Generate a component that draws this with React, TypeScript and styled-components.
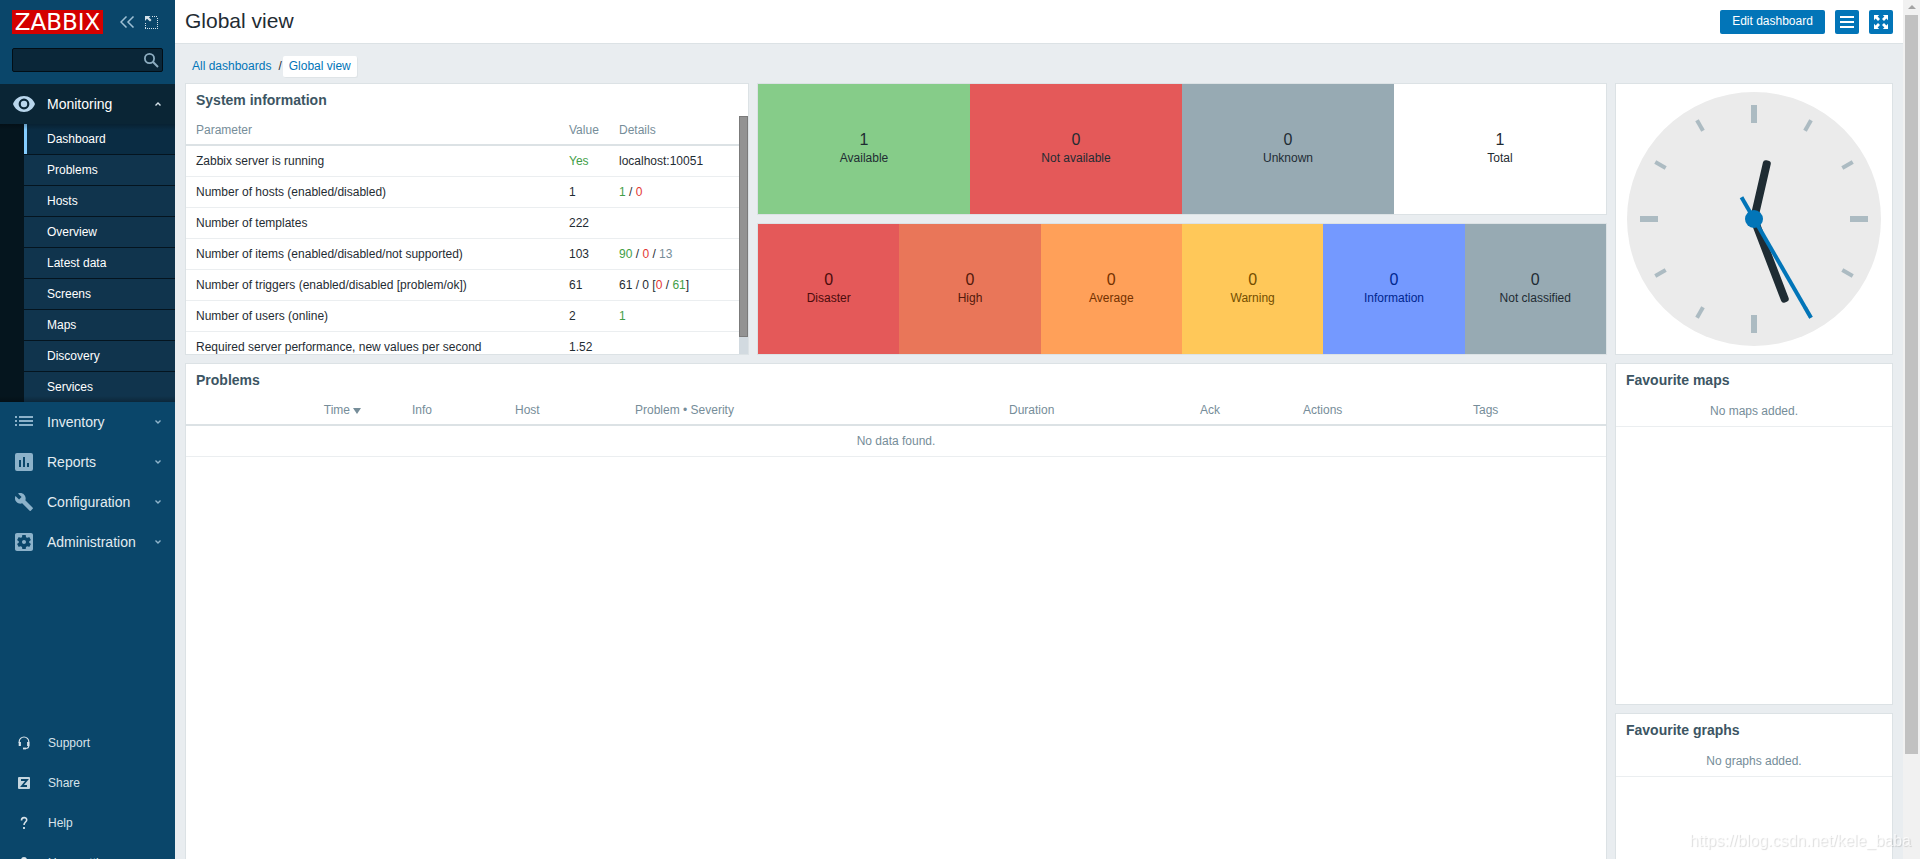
import React from 'react';
import styled, { createGlobalStyle } from 'styled-components';

const c = {
  side: '#0a466a',
  page: '#e9edf0',
  line: '#dce2e5',
  row: '#ebeef0',
  text: '#1f2c33',
  muted: '#768d99',
  title: '#3c5563',
  link: '#0275b8',
  green: '#429e47',
  red: '#e33734',
};

const GlobalStyle = createGlobalStyle`
  *, *::before, *::after { box-sizing: border-box; }
  body {
    margin: 0;
    background: ${c.page};
    color: ${c.text};
    font: 12px/18px "Liberation Sans", Arial, sans-serif;
  }
  ul { margin: 0; padding: 0; list-style: none; }
  a { color: inherit; text-decoration: none; }
`;

const Layout = styled.div`
  display: flex;
  height: 100vh;
  overflow: hidden;
`;

/* ---------- sidebar ---------- */

const Sidebar = styled.aside`
  flex: 0 0 175px;
  display: flex;
  flex-direction: column;
  overflow: hidden;
  background: ${c.side};
  color: #fff;
`;

const Brand = styled.div`
  display: flex;
  align-items: center;
  padding: 10px 12px 14px;
`;

const Logo = styled.a`
  width: 91px;
  height: 24px;
  margin-right: 17px;
  background: #d40000;
  color: #fff;
  font: 23px/24px "DejaVu Sans", sans-serif;
  text-align: center;
`;

const PlainButton = styled.button`
  display: flex;
  padding: 0;
  border: 0;
  background: none;
  color: #9fc0d5;
  & + & { margin-left: 10px; }
`;

const SearchBox = styled.form`
  display: flex;
  align-items: center;
  height: 24px;
  margin: 0 12px 12px;
  padding-right: 3px;
  border: 1px solid #020e16;
  border-radius: 2px;
  background: #0a2638;
`;

const SearchInput = styled.input`
  flex: 1;
  min-width: 0;
  height: 22px;
  padding: 0 5px;
  border: 0;
  outline: 0;
  background: none;
  color: #fff;
  font: inherit;
`;

const MenuButton = styled.button<{ $open?: boolean }>`
  display: flex;
  align-items: center;
  width: 100%;
  height: 40px;
  padding: 0 14px 0 12px;
  border: 0;
  background: ${p => (p.$open ? '#0a2535' : 'none')};
  color: ${p => (p.$open ? '#fff' : '#e3ecf1')};
  font: 14px/20px "Liberation Sans", Arial, sans-serif;
  text-align: left;
`;

const MenuIcon = styled.span<{ $open?: boolean }>`
  display: flex;
  justify-content: center;
  width: 24px;
  margin-right: 11px;
  color: ${p => (p.$open ? '#b9d6ec' : '#8cb2ca')};
`;

const MenuLabel = styled.span`
  flex: 1;
`;

const Submenu = styled.ul`
  position: relative;
  padding-left: 24px;
  background: #05151e;
  &::after {
    content: '';
    position: absolute;
    inset: 0;
    pointer-events: none;
    background: linear-gradient(rgba(0, 0, 0, 0.25), transparent 6px, transparent calc(100% - 6px), rgba(0, 0, 0, 0.25));
  }
`;

const SubmenuItem = styled.li`
  & + & { border-top: 1px solid #04141f; }
`;

const SubmenuLink = styled.a<{ $active?: boolean }>`
  display: block;
  height: 30px;
  padding-left: 20px;
  border-left: 3px solid ${p => (p.$active ? '#84cdff' : 'transparent')};
  background: ${p => (p.$active ? '#0a2c43' : '#10344d')};
  background-clip: border-box;
  color: #fff;
  line-height: 30px;
`;

const FooterMenu = styled.ul`
  margin-top: 161px;
`;

const FooterLink = styled.a`
  display: flex;
  align-items: center;
  height: 40px;
  padding-left: 17px;
  gap: 17px;
  color: #d8e3ea;
  svg { width: 14px; flex: none; }
`;

/* ---------- page ---------- */

const Main = styled.main`
  flex: 1;
  min-width: 0;
  overflow: hidden;
`;

const Header = styled.header`
  display: flex;
  align-items: center;
  gap: 10px;
  height: 44px;
  padding: 0 10px;
  border-bottom: 1px solid ${c.line};
  background: #fff;
`;

const PageTitle = styled.h1`
  flex: 1;
  margin: 0;
  padding-bottom: 2px;
  font-size: 21px;
  line-height: 24px;
  font-weight: 400;
`;

const ActionButton = styled.button<{ $icon?: boolean }>`
  display: flex;
  align-items: center;
  justify-content: center;
  height: 24px;
  width: ${p => (p.$icon ? '24px' : '105px')};
  padding: 0 0 2px;
  border: 0;
  border-radius: 2px;
  background: ${c.link};
  color: #fff;
  font: inherit;
  svg { margin-top: 2px; }
`;

const Breadcrumbs = styled.nav`
  display: flex;
  align-items: center;
  padding: 11px 17px 6px;
  line-height: 22px;
`;

const Crumb = styled.a<{ $current?: boolean }>`
  color: ${c.link};
  margin: ${p => (p.$current ? '0 0 0 1px' : '0 7px 0 0')};
  padding: ${p => (p.$current ? '0 6px' : '0')};
  background: ${p => (p.$current ? '#fff' : 'none')};
  border-radius: 2px;
  box-shadow: ${p => (p.$current ? `1px 1px 0 0 #dfe4e7` : 'none')};
  line-height: 21px;
`;

const Grid = styled.div`
  display: grid;
  grid-template-columns: repeat(24, 1fr);
  grid-auto-rows: 62px;
  gap: 8px;
  padding: 0 10px 44px;
`;

const Widget = styled.section<{ $cols: number; $rows: number }>`
  grid-column: span ${p => p.$cols};
  grid-row: span ${p => p.$rows};
  display: flex;
  flex-direction: column;
  min-width: 0;
  overflow: hidden;
  border: 1px solid ${c.line};
  background: #fff;
`;

const WidgetTitle = styled.h4`
  flex: none;
  margin: 0;
  padding: 6px 10px;
  color: ${c.title};
  font-size: 14px;
  line-height: 20px;
`;

const ScrollBody = styled.div`
  flex: 1;
  display: flex;
  min-height: 0;
`;

const ScrollContent = styled.div`
  flex: 1;
  overflow: hidden;
`;

const InnerTrack = styled.div`
  width: 9px;
  background: #d2dae0;
`;

const InnerThumb = styled.div`
  height: 93%;
  border: 1px solid #7b7b7b;
  background: #939393;
`;

const Table = styled.table`
  width: 100%;
  border-collapse: separate;
  border-spacing: 0;
  table-layout: fixed;
`;

const Th = styled.th<{ $right?: boolean }>`
  height: 30px;
  padding: 0 5px;
  border-bottom: 2px solid ${c.line};
  color: ${c.muted};
  font-weight: 400;
  text-align: ${p => (p.$right ? 'right' : 'left')};
  white-space: nowrap;
  &:first-child { padding-left: 10px; }
`;

const Td = styled.td`
  height: 31px;
  padding: 0 5px;
  border-bottom: 1px solid ${c.row};
  white-space: nowrap;
  &:first-child { padding-left: 10px; }
`;

const EmptyTd = styled(Td)`
  color: ${c.muted};
  text-align: center;
  &:first-child { padding: 0 5px; }
`;

const EmptyRow = styled.div`
  height: 31px;
  border-bottom: 1px solid ${c.row};
  color: ${c.muted};
  line-height: 30px;
  text-align: center;
`;

const Tone = styled.span<{ $tone: string }>`
  color: ${p => p.$tone};
`;

const SortArrow = styled.span`
  display: inline-block;
  margin-left: 3px;
  border: 4px solid transparent;
  border-top: 6px solid ${c.muted};
  border-bottom: 0;
`;

const Tiles = styled.div`
  flex: 1;
  display: flex;
`;

const Tile = styled.div<{ $bg: string; $fg: string }>`
  flex: 1 1 0;
  display: flex;
  flex-direction: column;
  align-items: center;
  justify-content: center;
  background: ${p => p.$bg};
  color: ${p => p.$fg};
`;

const TileCount = styled.span`
  font-size: 16px;
`;

const ClockBox = styled.div`
  flex: 1;
  display: flex;
  align-items: center;
  justify-content: center;
  min-height: 0;
  padding: 8px;
  svg { height: 100%; max-width: 100%; }
`;

const PageTrack = styled.div`
  flex: 0 0 17px;
  display: flex;
  flex-direction: column;
  align-items: center;
  background: #f1f1f1;
`;

const TrackArrow = styled.div`
  height: 15px;
  padding-top: 5px;
  &::before {
    content: '';
    display: block;
    border: 4px solid transparent;
    border-top: 0;
    border-bottom-color: #a3a3a3;
  }
`;

const PageThumb = styled.div`
  width: 13px;
  height: 86%;
  background: #c1c1c1;
`;

const Watermark = styled.div`
  position: fixed;
  right: 9px;
  bottom: 9px;
  color: rgba(255, 255, 255, 0.7);
  font-size: 16px;
  text-shadow: 1px 1px 1px rgba(0, 0, 0, 0.14);
`;

/* ---------- icons ---------- */

const EyeIcon = () => (
  <svg width="22" height="16" viewBox="0 0 22 16" fill="currentColor">
    <path fillRule="evenodd" d="M11 0C6 0 1.8 3.200 0 8c1.800 4.800 6 8 11 8s9.200-3.200 11-8C20.200 3.200 16 0 11 0zm0 13.400A5.400 5.400 0 1 1 11 2.600a5.400 5.400 0 0 1 0 10.800zM11 4.800a3.200 3.200 0 1 0 0 6.400 3.200 3.200 0 0 0 0-6.400z" />
  </svg>
);

const ListIcon = () => (
  <svg width="18" height="18" viewBox="0 0 18 18" fill="currentColor">
    <path d="M0 3h2v2H0zM4 3h14v2H4zM0 7h2v2H0zM4 7h14v2H4zM0 11h2v2H0zM4 11h14v2H4z" />
  </svg>
);

const ChartIcon = () => (
  <svg width="18" height="18" viewBox="0 0 18 18" fill="currentColor">
    <path fillRule="evenodd" d="M2 0h14a2 2 0 0 1 2 2v14a2 2 0 0 1-2 2H2a2 2 0 0 1-2-2V2a2 2 0 0 1 2-2zm2 7v7h2V7zm4-3v10h2V4zm4 6v4h2v-4z" />
  </svg>
);

const WrenchIcon = () => (
  <svg width="18" height="18" viewBox="1 1 22 22" fill="currentColor">
    <path d="M22.700 19l-9.100-9.100c.9-2.300.4-5-1.500-6.900-2-2-5-2.400-7.400-1.300L9 6 6 9 1.600 4.700C.4 7.100.9 10.100 2.900 12.100c1.900 1.900 4.600 2.400 6.900 1.500l9.100 9.100c.4.4 1 .4 1.400 0l2.300-2.300c.5-.4.5-1.100.1-1.400z" />
  </svg>
);

const GearIcon = () => (
  <svg width="18" height="18" viewBox="3 3 18 18" fill="currentColor">
    <path d="M12 10c-1.100 0-2 .9-2 2s.9 2 2 2 2-.9 2-2-.9-2-2-2zm7-7H5c-1.110 0-2 .9-2 2v14c0 1.100.890 2 2 2h14c1.110 0 2-.9 2-2V5c0-1.100-.890-2-2-2zm-1.750 9c0 .230-.020.460-.050.680l1.480 1.160c.130.110.170.300.080.450l-1.400 2.420c-.090.150-.270.210-.430.150l-1.740-.700c-.360.280-.760.510-1.180.690l-.260 1.850c-.030.170-.180.300-.350.300h-2.800c-.170 0-.320-.130-.350-.290l-.260-1.850c-.430-.180-.820-.410-1.180-.690l-1.740.700c-.160.060-.340 0-.430-.150l-1.400-2.420c-.090-.150-.050-.340.080-.450l1.480-1.160c-.030-.230-.050-.460-.050-.690s.020-.460.050-.680l-1.480-1.160c-.130-.110-.170-.300-.080-.450l1.400-2.420c.090-.150.270-.210.430-.150l1.740.700c.360-.280.760-.510 1.180-.690l.260-1.850c.030-.170.180-.300.350-.300h2.800c.170 0 .320.130.350.290l.260 1.850c.430.180.820.410 1.180.690l1.740-.700c.160-.060.340 0 .430.150l1.400 2.420c.090.150.050.340-.080.450l-1.480 1.160c.030.230.050.460.050.690z" />
  </svg>
);

const Chevron = ({ up }: { up?: boolean }) => (
  <svg width="6" height="4" viewBox="0 0 6 4" fill="none" stroke={up ? '#d5e2ea' : '#8fb4cb'} strokeWidth="1.400">
    <path d={up ? 'M.5 3.500L3 1l2.500 2.500' : 'M.5.5L3 3 5.500.5'} />
  </svg>
);

const CollapseIcon = () => (
  <svg width="15" height="12" viewBox="0 0 15 12" fill="none" stroke="currentColor" strokeWidth="1.500">
    <path d="M6.500.5L1 6l5.500 5.500M13.500.5L8 6l5.500 5.500" />
  </svg>
);

const KioskIcon = () => (
  <svg width="13" height="13" viewBox="0 0 13 13">
    <path d="M7 .5h6M12.500 2v11M0 12.500h12M.5 7v6" stroke="#d5e2ea" strokeDasharray="1 1" fill="none" />
    <path d="M0 0h5.500L4 1.500 6.500 4 5 5.500 2 2.800 0 5z" fill="#d5e2ea" />
  </svg>
);

const SearchIcon = () => (
  <svg width="15" height="15" viewBox="0 0 15 15" fill="none" stroke="#8cacc0">
    <circle cx="5.500" cy="5.500" r="4.600" strokeWidth="1.800" />
    <path d="M8.800 8.800l5.200 5.200" strokeWidth="2" />
  </svg>
);

const HeadsetIcon = () => (
  <svg height="14" viewBox="0 0 14 14" fill="none" stroke="currentColor">
    <path d="M2.200 7V5.800a4.800 4.800 0 0 1 9.600 0V9.500c0 1.800-1 3-3.300 3" strokeWidth="1.200" />
    <path d="M2.800 6v4M11.200 6v4" strokeWidth="2.200" />
    <path d="M6 12.500h3" strokeWidth="1.800" />
  </svg>
);

const ShareIcon = () => (
  <svg height="12" viewBox="0 0 12 12">
    <rect width="12" height="12" rx="1" fill="#c4d5df" />
    <path d="M3 3h6L4 9h5" fill="none" stroke={c.side} strokeWidth="1.800" />
  </svg>
);

const HelpIcon = () => (
  <svg height="14" viewBox="0 0 14 14" fill="none" stroke="currentColor" strokeWidth="1.600">
    <path d="M4.500 4.500c0-3.800 5.200-3.600 5.200-.6C9.700 6 7 6.200 7 9" />
    <path d="M7 11v2" strokeWidth="1.800" />
  </svg>
);

const UserIcon = () => (
  <svg height="14" viewBox="0 0 14 14" fill="currentColor">
    <circle cx="7" cy="4" r="3" />
    <path d="M1 13c0-6 12-6 12 0z" />
  </svg>
);

const BurgerIcon = () => (
  <svg width="14" height="12" viewBox="0 0 14 12" fill="currentColor">
    <path d="M0 0h14v2H0zM0 5h14v2H0zM0 10h14v2H0z" />
  </svg>
);

const ExpandIcon = () => (
  <svg width="14" height="14" viewBox="0 0 14 14" fill="currentColor">
    {[0, 90, 180, 270].map(a => (
      <path key={a} transform={`rotate(${a} 7 7)`} d="M0 0h5.200L3.600 1.600 6 4 4 6 1.600 3.600 0 5.200z" />
    ))}
  </svg>
);

const Clock = () => (
  <svg viewBox="0 0 254 254" role="img" aria-label="Clock">
    <circle cx="127" cy="127" r="127" fill="#ebebeb" />
    {Array.from({ length: 12 }, (_, i) => {
      const major = i % 3 === 0;
      return (
        <rect
          key={i}
          x={major ? 124 : 125}
          y="13"
          width={major ? 6 : 4}
          height={major ? 18 : 12}
          fill="#acbbc2"
          transform={`rotate(${i * 30} 127 127)`}
        />
      );
    })}
    <rect x="123" y="67" width="8" height="60" rx="3" fill={c.text} transform="rotate(13 127 127)" />
    <rect x="123" y="38" width="8" height="89" rx="3" fill={c.text} transform="rotate(159 127 127)" />
    <rect x="125" y="13" width="4" height="139" fill={c.link} transform="rotate(150 127 127)" />
    <circle cx="127" cy="127" r="9" fill={c.link} />
  </svg>
);

/* ---------- data ---------- */

const monitoring = ['Dashboard', 'Problems', 'Hosts', 'Overview', 'Latest data', 'Screens', 'Maps', 'Discovery', 'Services'];

const sections = [
  { label: 'Inventory', icon: <ListIcon /> },
  { label: 'Reports', icon: <ChartIcon /> },
  { label: 'Configuration', icon: <WrenchIcon /> },
  { label: 'Administration', icon: <GearIcon /> },
];

const footer = [
  { label: 'Support', icon: <HeadsetIcon /> },
  { label: 'Share', icon: <ShareIcon /> },
  { label: 'Help', icon: <HelpIcon /> },
  { label: 'User settings', icon: <UserIcon /> },
];

const G = ({ children }: { children: React.ReactNode }) => <Tone $tone={c.green}>{children}</Tone>;
const R = ({ children }: { children: React.ReactNode }) => <Tone $tone={c.red}>{children}</Tone>;

const systemInfo: { name: string; value: React.ReactNode; details?: React.ReactNode }[] = [
  { name: 'Zabbix server is running', value: <G>Yes</G>, details: 'localhost:10051' },
  { name: 'Number of hosts (enabled/disabled)', value: '1', details: <><G>1</G> / <R>0</R></> },
  { name: 'Number of templates', value: '222' },
  {
    name: 'Number of items (enabled/disabled/not supported)',
    value: '103',
    details: <><G>90</G> / <R>0</R> / <Tone $tone={c.muted}>13</Tone></>,
  },
  {
    name: 'Number of triggers (enabled/disabled [problem/ok])',
    value: '61',
    details: <>61 / 0 [<R>0</R> / <G>61</G>]</>,
  },
  { name: 'Number of users (online)', value: '2', details: <G>1</G> },
  { name: 'Required server performance, new values per second', value: '1.52' },
];

const hosts = [
  { label: 'Available', count: 1, bg: '#86cc89', fg: c.text },
  { label: 'Not available', count: 0, bg: '#e45959', fg: c.text },
  { label: 'Unknown', count: 0, bg: '#97aab3', fg: c.text },
  { label: 'Total', count: 1, bg: '#ffffff', fg: c.text },
];

const severities = [
  { label: 'Disaster', count: 0, bg: '#e45959', fg: '#4b0c0c' },
  { label: 'High', count: 0, bg: '#e97659', fg: '#52190b' },
  { label: 'Average', count: 0, bg: '#ffa059', fg: '#733100' },
  { label: 'Warning', count: 0, bg: '#ffc859', fg: '#734d00' },
  { label: 'Information', count: 0, bg: '#7499ff', fg: '#00268e' },
  { label: 'Not classified', count: 0, bg: '#97aab3', fg: c.text },
];

const TileRow = ({ items }: { items: typeof hosts }) => (
  <Tiles>
    {items.map(t => (
      <Tile key={t.label} $bg={t.bg} $fg={t.fg}>
        <TileCount>{t.count}</TileCount>
        <span>{t.label}</span>
      </Tile>
    ))}
  </Tiles>
);

export default function App() {
  return (
    <>
      <GlobalStyle />
      <Layout>
        <Sidebar>
          <Brand>
            <Logo href="#">ZABBIX</Logo>
            <PlainButton aria-label="Collapse sidebar"><CollapseIcon /></PlainButton>
            <PlainButton aria-label="Hide sidebar"><KioskIcon /></PlainButton>
          </Brand>
          <SearchBox role="search">
            <SearchInput type="text" aria-label="Search" />
            <PlainButton type="button" aria-label="Search"><SearchIcon /></PlainButton>
          </SearchBox>
          <nav>
            <MenuButton $open>
              <MenuIcon $open><EyeIcon /></MenuIcon>
              <MenuLabel>Monitoring</MenuLabel>
              <Chevron up />
            </MenuButton>
            <Submenu>
              {monitoring.map((m, i) => (
                <SubmenuItem key={m}>
                  <SubmenuLink href="#" $active={i === 0}>{m}</SubmenuLink>
                </SubmenuItem>
              ))}
            </Submenu>
            {sections.map(s => (
              <MenuButton key={s.label}>
                <MenuIcon>{s.icon}</MenuIcon>
                <MenuLabel>{s.label}</MenuLabel>
                <Chevron />
              </MenuButton>
            ))}
          </nav>
          <FooterMenu>
            {footer.map(f => (
              <li key={f.label}>
                <FooterLink href="#">{f.icon}{f.label}</FooterLink>
              </li>
            ))}
          </FooterMenu>
        </Sidebar>

        <Main>
          <Header>
            <PageTitle>Global view</PageTitle>
            <ActionButton>Edit dashboard</ActionButton>
            <ActionButton $icon aria-label="Actions"><BurgerIcon /></ActionButton>
            <ActionButton $icon aria-label="Kiosk mode"><ExpandIcon /></ActionButton>
          </Header>
          <Breadcrumbs>
            <Crumb href="#">All dashboards</Crumb>
            <span>/</span>
            <Crumb href="#" $current>Global view</Crumb>
          </Breadcrumbs>

          <Grid>
            <Widget $cols={8} $rows={4}>
              <WidgetTitle>System information</WidgetTitle>
              <ScrollBody>
                <ScrollContent>
                  <Table>
                    <colgroup>
                      <col />
                      <col width="50" />
                      <col width="125" />
                    </colgroup>
                    <thead>
                      <tr><Th>Parameter</Th><Th>Value</Th><Th>Details</Th></tr>
                    </thead>
                    <tbody>
                      {systemInfo.map(r => (
                        <tr key={r.name}>
                          <Td>{r.name}</Td>
                          <Td>{r.value}</Td>
                          <Td>{r.details}</Td>
                        </tr>
                      ))}
                    </tbody>
                  </Table>
                </ScrollContent>
                <InnerTrack><InnerThumb /></InnerTrack>
              </ScrollBody>
            </Widget>

            <Widget $cols={12} $rows={2}><TileRow items={hosts} /></Widget>
            <Widget $cols={4} $rows={4}><ClockBox><Clock /></ClockBox></Widget>
            <Widget $cols={12} $rows={2}><TileRow items={severities} /></Widget>

            <Widget $cols={20} $rows={8}>
              <WidgetTitle>Problems</WidgetTitle>
              <Table>
                <colgroup>
                  <col width="180" />
                  <col width="41" />
                  <col width="103" />
                  <col width="120" />
                  <col />
                  <col width="191" />
                  <col width="103" />
                  <col width="170" />
                  <col width="138" />
                </colgroup>
                <thead>
                  <tr>
                    <Th $right>Time<SortArrow /></Th>
                    <Th />
                    <Th>Info</Th>
                    <Th>Host</Th>
                    <Th>Problem • Severity</Th>
                    <Th>Duration</Th>
                    <Th>Ack</Th>
                    <Th>Actions</Th>
                    <Th>Tags</Th>
                  </tr>
                </thead>
                <tbody>
                  <tr><EmptyTd colSpan={9}>No data found.</EmptyTd></tr>
                </tbody>
              </Table>
            </Widget>

            <Widget $cols={4} $rows={5}>
              <WidgetTitle>Favourite maps</WidgetTitle>
              <EmptyRow>No maps added.</EmptyRow>
            </Widget>
            <Widget $cols={4} $rows={3}>
              <WidgetTitle>Favourite graphs</WidgetTitle>
              <EmptyRow>No graphs added.</EmptyRow>
            </Widget>
          </Grid>
        </Main>

        <PageTrack aria-hidden="true">
          <TrackArrow />
          <PageThumb />
        </PageTrack>
      </Layout>
      <Watermark>https://blog.csdn.net/kele_baba</Watermark>
    </>
  );
}
